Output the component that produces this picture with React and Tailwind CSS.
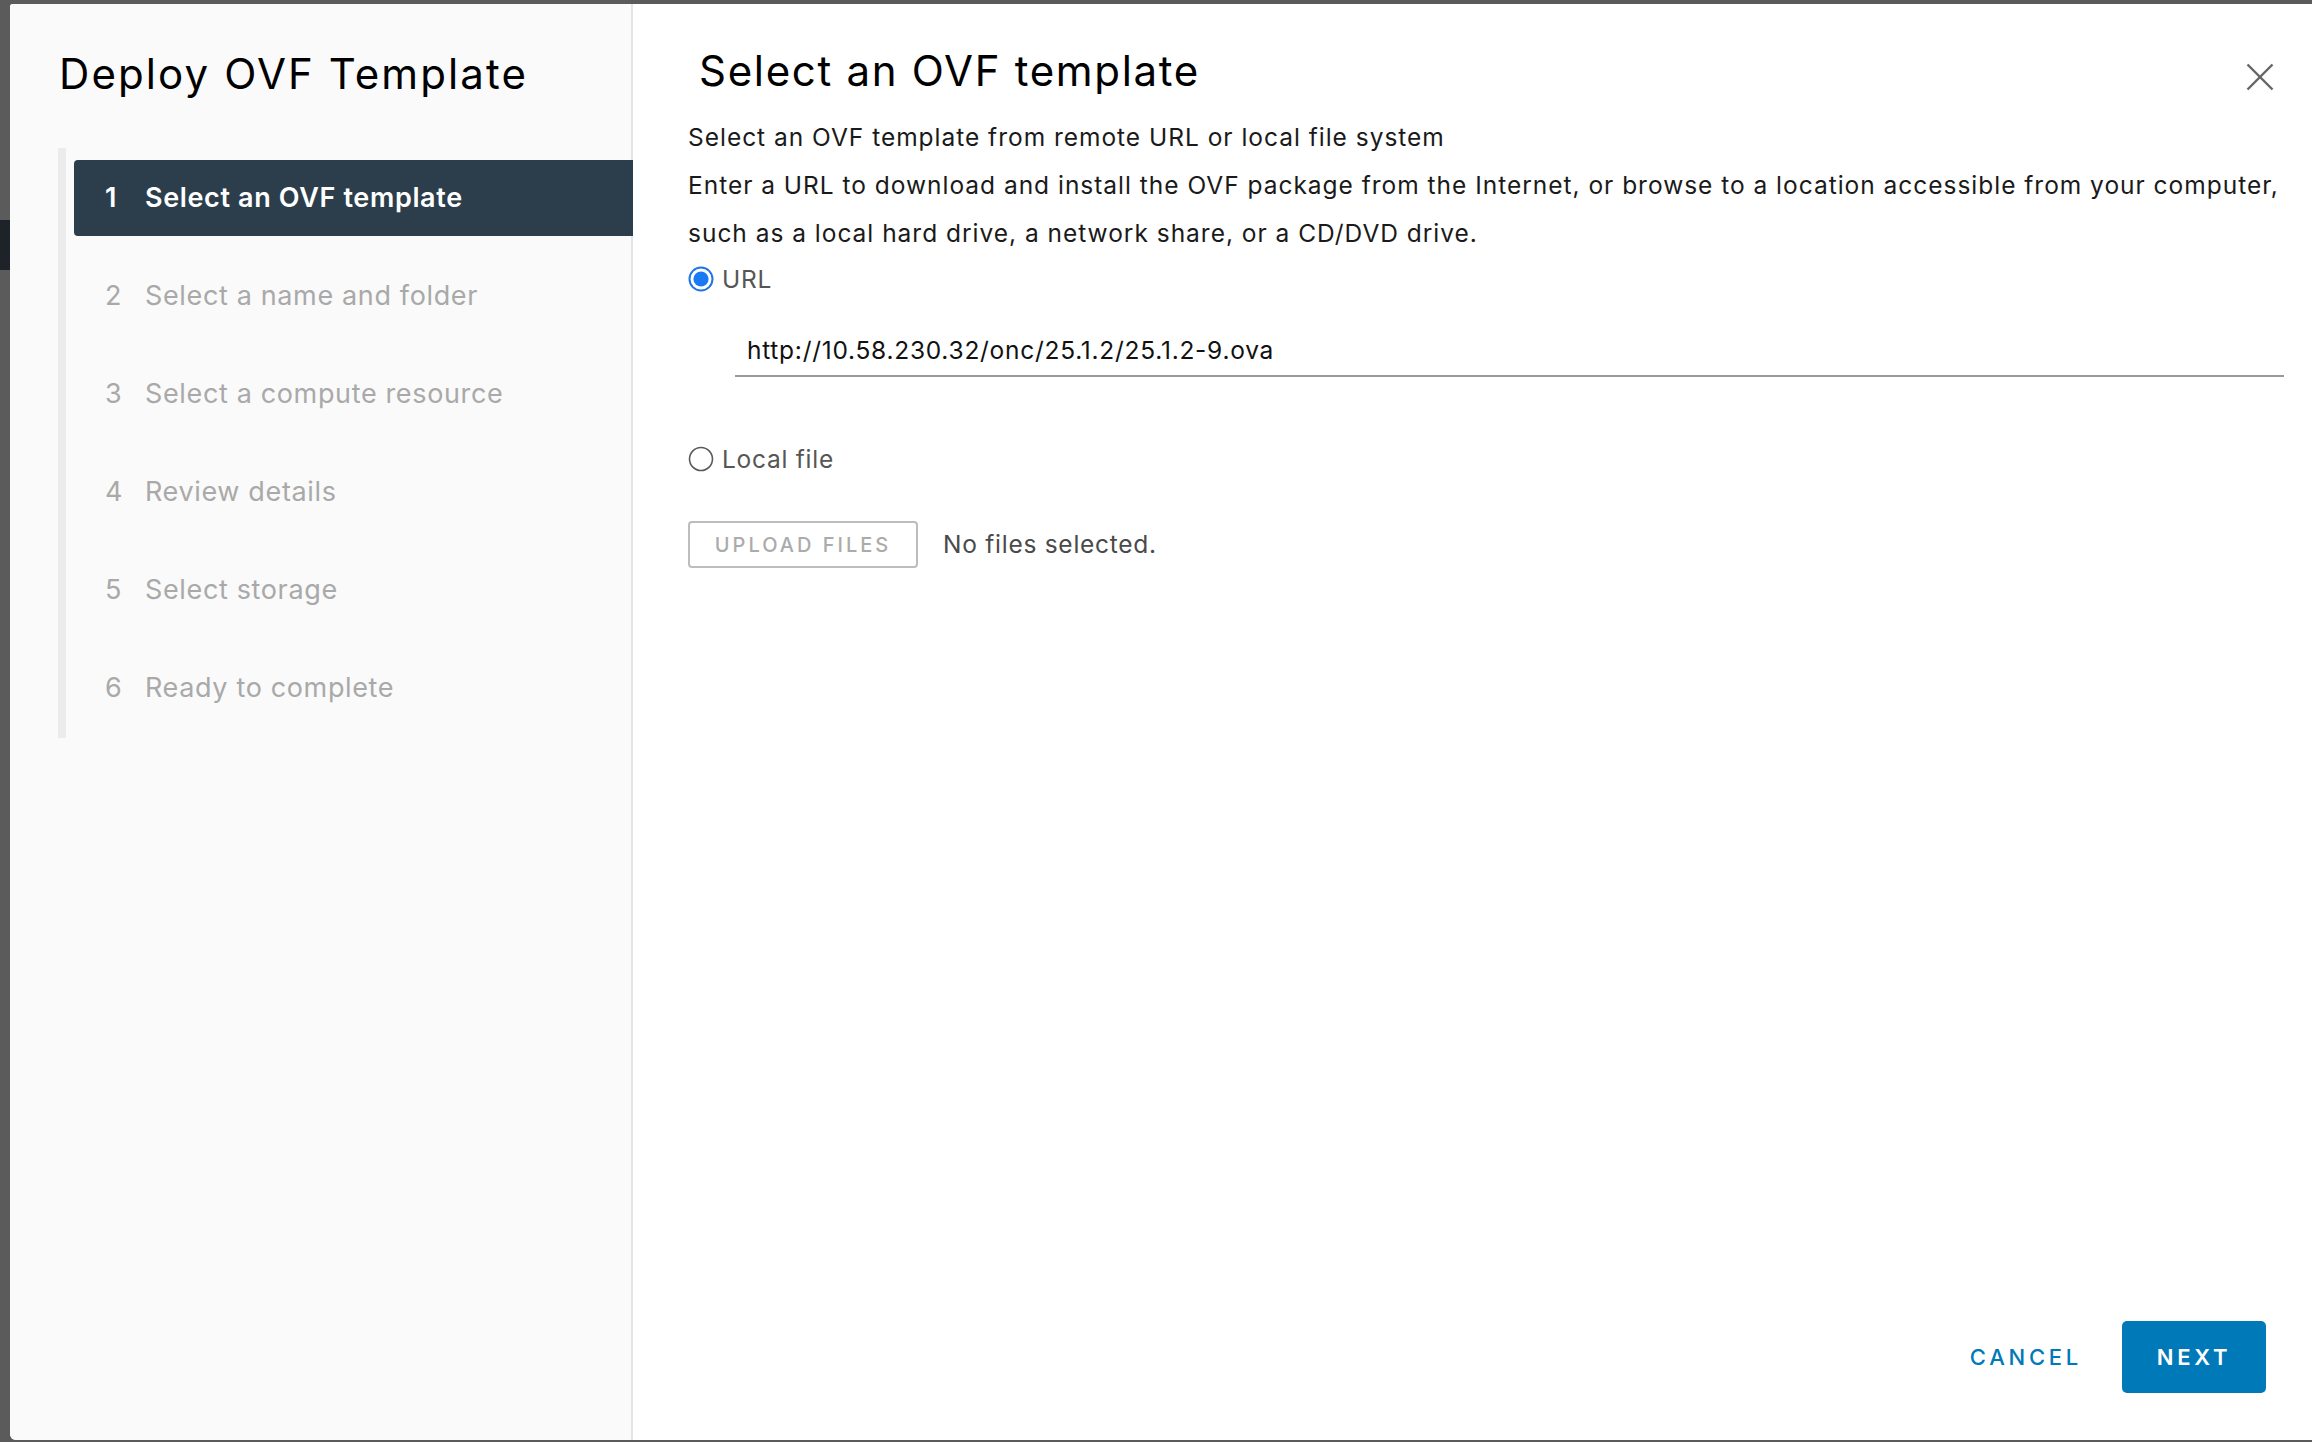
import React from "react";

const FONT = { fontFamily: "Inter, 'Noto Sans', sans-serif" };

const steps = [
  "Select an OVF template",
  "Select a name and folder",
  "Select a compute resource",
  "Review details",
  "Select storage",
  "Ready to complete",
];

function RadioChecked() {
  return (
    <svg width="26" height="26" viewBox="0 0 26 26" className="shrink-0">
      <circle cx="13" cy="13" r="11.5" fill="white" stroke="#1f74e6" strokeWidth="2" />
      <circle cx="13" cy="13" r="7.6" fill="#1a7af3" />
    </svg>
  );
}

function RadioEmpty() {
  return (
    <svg width="26" height="26" viewBox="0 0 26 26" className="shrink-0">
      <circle cx="13" cy="13" r="11.5" fill="white" stroke="#5a5a5a" strokeWidth="1.6" />
    </svg>
  );
}

export default function App() {
  return (
    <div className="w-[2312px] h-[1442px] bg-[#5b5b5b] flex overflow-hidden" style={FONT}>
      <div className="w-[10px] shrink-0 flex flex-col">
        <div className="h-[220px] bg-[#5b5b5b]" />
        <div className="h-[50px] bg-[#1d2329]" />
        <div className="flex-1 bg-[#5b5b5b]" />
      </div>
      <div className="flex-1 flex flex-col">
        <div className="h-[4px] shrink-0" />
        <div className="flex-1 mb-[2px] flex bg-white rounded-tl-[3px] rounded-bl-[6px] overflow-hidden">
          {/* Sidebar */}
          <div className="w-[623px] shrink-0 bg-[#fafafa] border-r-2 border-[#e4e4e4] pt-[42px]">
            <h1 className="pl-[49px] text-[42px] leading-[56px] text-black font-normal tracking-[0.05em]">
              Deploy OVF Template
            </h1>
            <div className="mt-[46px] ml-[48px] border-l-[8px] border-[#ececec] py-[12px] pl-[8px] flex flex-col gap-[22px]">
              {steps.map((s, i) => {
                const active = i === 0;
                return (
                  <div
                    key={s}
                    className={
                      active
                        ? "h-[76px] flex items-center pl-[31px] bg-[#2c3e4c] text-white font-semibold rounded-l-[4px] mr-[-2px] tracking-[0.04em]"
                        : "h-[76px] flex items-center pl-[31px] text-[#a9a9a9] tracking-[0.04em]"
                    }
                  >
                    <span className="w-[40px] text-[27px]">{i + 1}</span>
                    <span className="text-[27px]">{s}</span>
                  </div>
                );
              })}
            </div>
          </div>

          {/* Content */}
          <div className="flex-1 flex flex-col pl-[55px] pr-[28px]">
            <div className="flex items-start justify-between pt-[39px]">
              <h2 className="pl-[11px] text-[42px] leading-[56px] text-black font-normal tracking-[0.04em]">
                Select an OVF template
              </h2>
              <button className="mt-[19px] mr-[9px] w-[30px] h-[30px] flex items-center justify-center">
                <svg width="28" height="28" viewBox="0 0 28 28">
                  <line x1="1.5" y1="1.5" x2="26.5" y2="26.5" stroke="#666" strokeWidth="2.4" />
                  <line x1="26.5" y1="1.5" x2="1.5" y2="26.5" stroke="#666" strokeWidth="2.4" />
                </svg>
              </button>
            </div>
            <div className="mt-[14px] text-[24.5px] leading-[48px] text-[#1a1a1a] whitespace-nowrap tracking-[0.04em]">
              <p>Select an OVF template from remote URL or local file system</p>
              <p>
                Enter a URL to download and install the OVF package from the Internet, or browse to a location accessible from your computer,
                <br />
                such as a local hard drive, a network share, or a CD/DVD drive.
              </p>
            </div>
            <label className="h-[48px] flex items-center gap-[8px] mt-[-2px]">
              <RadioChecked />
              <span className="text-[24.5px] text-[#565656] tracking-[0.03em]">URL</span>
            </label>
            <div className="ml-[47px] mr-[0px] mt-[22px] h-[52px] border-b-2 border-[#9a9a9a] flex items-center pl-[12px]">
              <span className="text-[24.5px] text-[#111] tracking-[0.03em]">http://10.58.230.32/onc/25.1.2/25.1.2-9.ova</span>
            </div>
            <label className="h-[48px] flex items-center gap-[8px] mt-[58px]">
              <RadioEmpty />
              <span className="text-[24.5px] text-[#565656] tracking-[0.03em]">Local file</span>
            </label>
            <div className="flex items-center mt-[38px] gap-[25px]">
              <button className="w-[230px] h-[47px] border-2 border-[#bdbdbd] rounded-[4px] text-[20px] tracking-[0.15em] text-[#ababab] font-medium">
                UPLOAD FILES
              </button>
              <span className="text-[24.5px] text-[#4a4a4a] tracking-[0.03em]">No files selected.</span>
            </div>

            <div className="flex-1" />
            <div className="flex items-center justify-end pb-[47px] pr-[18px] gap-[40px]">
              <button className="text-[22px] tracking-[0.17em] text-[#0079b8] font-medium">CANCEL</button>
              <button className="w-[144px] h-[72px] bg-[#0079b8] rounded-[5px] text-white text-[22px] tracking-[0.17em] font-semibold">
                NEXT
              </button>
            </div>
          </div>
        </div>
      </div>
    </div>
  );
}
